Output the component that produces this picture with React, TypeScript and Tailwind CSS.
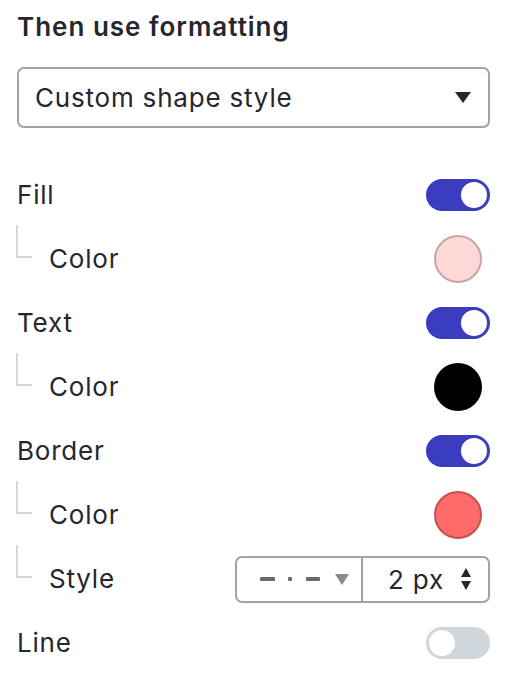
import React from "react";

const font = { fontFamily: "Inter, 'Noto Sans', sans-serif" };

function Toggle({ on }: { on: boolean }) {
  return (
    <div
      className={`w-[64px] h-[32px] rounded-full flex items-center px-[3px] ${
        on ? "bg-[#3b3dbf] justify-end" : "bg-[#cfd6dc] justify-start"
      }`}
    >
      <div className="w-[26px] h-[26px] rounded-full bg-white" />
    </div>
  );
}

function Swatch({ cls }: { cls: string }) {
  return <div className={`w-[48px] h-[48px] rounded-full ${cls}`} />;
}

function Row({
  label,
  child,
  right,
}: {
  label: string;
  child?: boolean;
  right: React.ReactNode;
}) {
  return (
    <div className="h-[64px] flex items-center justify-between">
      <div className="flex items-center h-full">
        {child && (
          <div className="w-[32px] h-full relative">
            <div className="absolute left-[-1px] top-[-2px] w-[2px] h-[33px] bg-[#d3d8de]" />
            <div className="absolute left-[-1px] top-[29px] w-[16px] h-[2px] bg-[#d3d8de]" />
          </div>
        )}
        <span className="text-[26px] tracking-[0.8px] text-[#26262e] leading-none">{label}</span>
      </div>
      {right}
    </div>
  );
}

export default function App() {
  return (
    <div className="w-[518px] h-[674px] bg-white pl-[17px] pr-[28px]" style={font}>
      <div className="pt-[11px] text-[26px] leading-[32px] font-semibold text-[#26262e] tracking-[1px]">
        Then use formatting
      </div>
      <div className="mt-[24px] h-[61px] border-2 border-[#a3a3a3] rounded-[7px] flex items-center justify-between pl-[16px] pr-[17px]">
        <span className="text-[26px] tracking-[0.8px] text-[#26262e]">Custom shape style</span>
        <svg width="16" height="12" viewBox="0 0 16 12">
          <polygon points="0,0 16,0 8,11" fill="#26262e" />
        </svg>
      </div>
      <div className="mt-[35px]">
        <Row label="Fill" right={<Toggle on />} />
        <Row
          label="Color"
          child
          right={<Swatch cls="bg-[#fdd8d7] border-2 border-[#c9a4a4] mr-[8px]" />}
        />
        <Row label="Text" right={<Toggle on />} />
        <Row label="Color" child right={<Swatch cls="bg-black mr-[8px]" />} />
        <Row label="Border" right={<Toggle on />} />
        <Row
          label="Color"
          child
          right={<Swatch cls="bg-[#ff6b6b] border-2 border-[#c25252] mr-[8px]" />}
        />
        <Row
          label="Style"
          child
          right={
            <div className="w-[255px] h-[47px] border-2 border-[#a3a3a3] rounded-[7px] flex">
              <div className="w-[126px] h-full flex items-center border-r-2 border-[#a3a3a3] pl-[23px]">
                <svg width="60" height="8" viewBox="0 0 60 8">
                  <rect x="0" y="2" width="15" height="4" rx="1" fill="#6b6b6b" />
                  <rect x="28" y="2" width="4" height="4" rx="1" fill="#6b6b6b" />
                  <rect x="46" y="2" width="14" height="4" rx="1" fill="#6b6b6b" />
                </svg>
                <svg className="ml-[15px]" width="14" height="11" viewBox="0 0 14 11">
                  <polygon points="0,0 14,0 7,11" fill="#8a8a8f" />
                </svg>
              </div>
              <div className="flex-1 flex items-center justify-end pr-[16px]">
                <span className="text-[26px] tracking-[0.8px] text-[#26262e] mr-[16px]">2 px</span>
                <svg width="12" height="24" viewBox="0 0 12 24">
                  <polygon points="6,1 11,10 1,10" fill="#26262e" />
                  <polygon points="1,14 11,14 6,23" fill="#26262e" />
                </svg>
              </div>
            </div>
          }
        />
        <Row label="Line" right={<Toggle on={false} />} />
      </div>
    </div>
  );
}
